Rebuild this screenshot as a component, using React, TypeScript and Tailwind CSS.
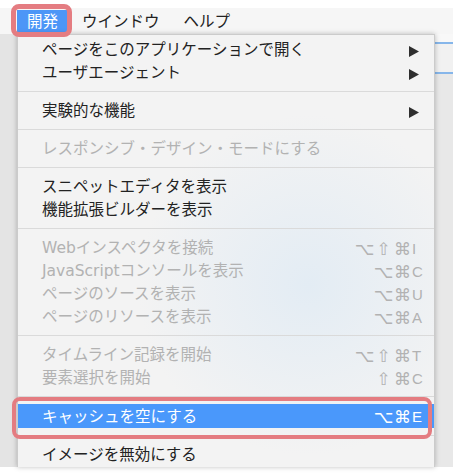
type Row =
  | { kind: "sep" }
  | {
      kind: "item";
      label: string;
      arrow?: boolean;
      disabled?: boolean;
      active?: boolean;
      mods?: string[];
      k?: string;
    };

const rows: Row[] = [
  { kind: "item", label: "ページをこのアプリケーションで開く", arrow: true },
  { kind: "item", label: "ユーザエージェント", arrow: true },
  { kind: "sep" },
  { kind: "item", label: "実験的な機能", arrow: true },
  { kind: "sep" },
  { kind: "item", label: "レスポンシブ・デザイン・モードにする", disabled: true },
  { kind: "sep" },
  { kind: "item", label: "スニペットエディタを表示" },
  { kind: "item", label: "機能拡張ビルダーを表示" },
  { kind: "sep" },
  { kind: "item", label: "Webインスペクタを接続", disabled: true, mods: ["⌥", "⇧", "⌘"], k: "I" },
  { kind: "item", label: "JavaScriptコンソールを表示", disabled: true, mods: ["⌥", "⌘"], k: "C" },
  { kind: "item", label: "ページのソースを表示", disabled: true, mods: ["⌥", "⌘"], k: "U" },
  { kind: "item", label: "ページのリソースを表示", disabled: true, mods: ["⌥", "⌘"], k: "A" },
  { kind: "sep" },
  { kind: "item", label: "タイムライン記録を開始", disabled: true, mods: ["⌥", "⇧", "⌘"], k: "T" },
  { kind: "item", label: "要素選択を開始", disabled: true, mods: ["⇧", "⌘"], k: "C" },
  { kind: "sep" },
  { kind: "item", label: "キャッシュを空にする", active: true, mods: ["⌥", "⌘"], k: "E" },
  { kind: "sep" },
  { kind: "item", label: "イメージを無効にする" },
];

function Arrow() {
  return (
    <svg width="10" height="11" viewBox="0 0 10 11" className="mr-[7px]">
      <polygon points="0,0 10,5.5 0,11" fill="#2e2e2e" />
    </svg>
  );
}

function Shortcut({ mods, k }: { mods: string[]; k: string }) {
  return (
    <span className="flex items-center">
      {mods.map((m, i) => (
        <span key={i} className="w-[19px] text-center text-[17px] leading-none font-['DejaVu_Sans',sans-serif]">
          {m}
        </span>
      ))}
      <span className="w-[14px] text-[15px] font-['Liberation_Sans',sans-serif]">{k}</span>
    </span>
  );
}

export default function App() {
  return (
    <div className="w-[453px] h-[474px] bg-white flex flex-col overflow-hidden font-['DejaVu_Sans','Noto_Sans_CJK_JP',sans-serif]">
      <div className="h-[8px]" />

      {/* menu bar */}
      <div className="h-[26px] bg-[#f6f6f6] flex items-stretch py-[2px] pl-[17px] gap-[4px] text-[15.5px] text-[#222]">
        <div className="relative flex items-center pt-[3px] px-[10px] bg-[#4c96f7] text-white">
          開発
          <span className="absolute -left-[6px] -right-[4px] -top-[6px] -bottom-[5px] border-[5px] border-[#e47c81] rounded-[8px] z-10" />
        </div>
        <div className="flex items-center pt-[3px] px-[10px]">ウインドウ</div>
        <div className="flex items-center pt-[3px] px-[10px]">ヘルプ</div>
      </div>

      <div className="flex h-[433px]">
        <div className="w-[17px] bg-[#e4e4e4]" />

        {/* dropdown */}
        <div className="relative w-[418px] border-x border-t border-[#cbcbcb] pt-[3px] shadow-[0_0_5px_rgba(0,0,0,0.25)] bg-[radial-gradient(circle_at_290px_250px,#e3ecf4,#f3f3f3_170px)]">
          {rows.map((r, i) =>
            r.kind === "sep" ? (
              <div key={i} className="py-[7px]">
                <div className="h-px bg-[#dadada]" />
              </div>
            ) : (
              <div
                key={i}
                className={
                  r.active
                    ? "relative flex items-center h-[24px] pt-[3px] pl-[24px] pr-[8px] text-[15.5px] bg-[#4a98fb] text-white"
                    : r.disabled
                    ? "relative flex items-center h-[23px] pt-[3px] pl-[24px] pr-[8px] text-[15.5px] text-[#b2b2b2]"
                    : "relative flex items-center h-[23px] pt-[3px] pl-[24px] pr-[8px] text-[15.5px] text-[#222]"
                }
              >
                <span className="flex-1 whitespace-nowrap">{r.label}</span>
                {r.arrow && <Arrow />}
                {r.mods && r.k && <Shortcut mods={r.mods} k={r.k} />}
                {r.active && (
                  <span className="absolute -left-[6px] right-[2px] -top-[7px] -bottom-[11px] border-4 border-[#e47c81] rounded-[8px] z-10" />
                )}
              </div>
            )
          )}
        </div>

        {/* background window on the right */}
        <div className="flex-1 flex flex-col">
          <div className="h-[8px] bg-[#f8f8f8]" />
          <div className="h-[2px] bg-[#86b6ea]" />
          <div className="h-[28px] bg-[#f1f1f1]" />
          <div className="h-[2px] bg-[#86b6ea]" />
          <div className="flex-1 bg-[#e8e8e8]" />
        </div>
      </div>
    </div>
  );
}
